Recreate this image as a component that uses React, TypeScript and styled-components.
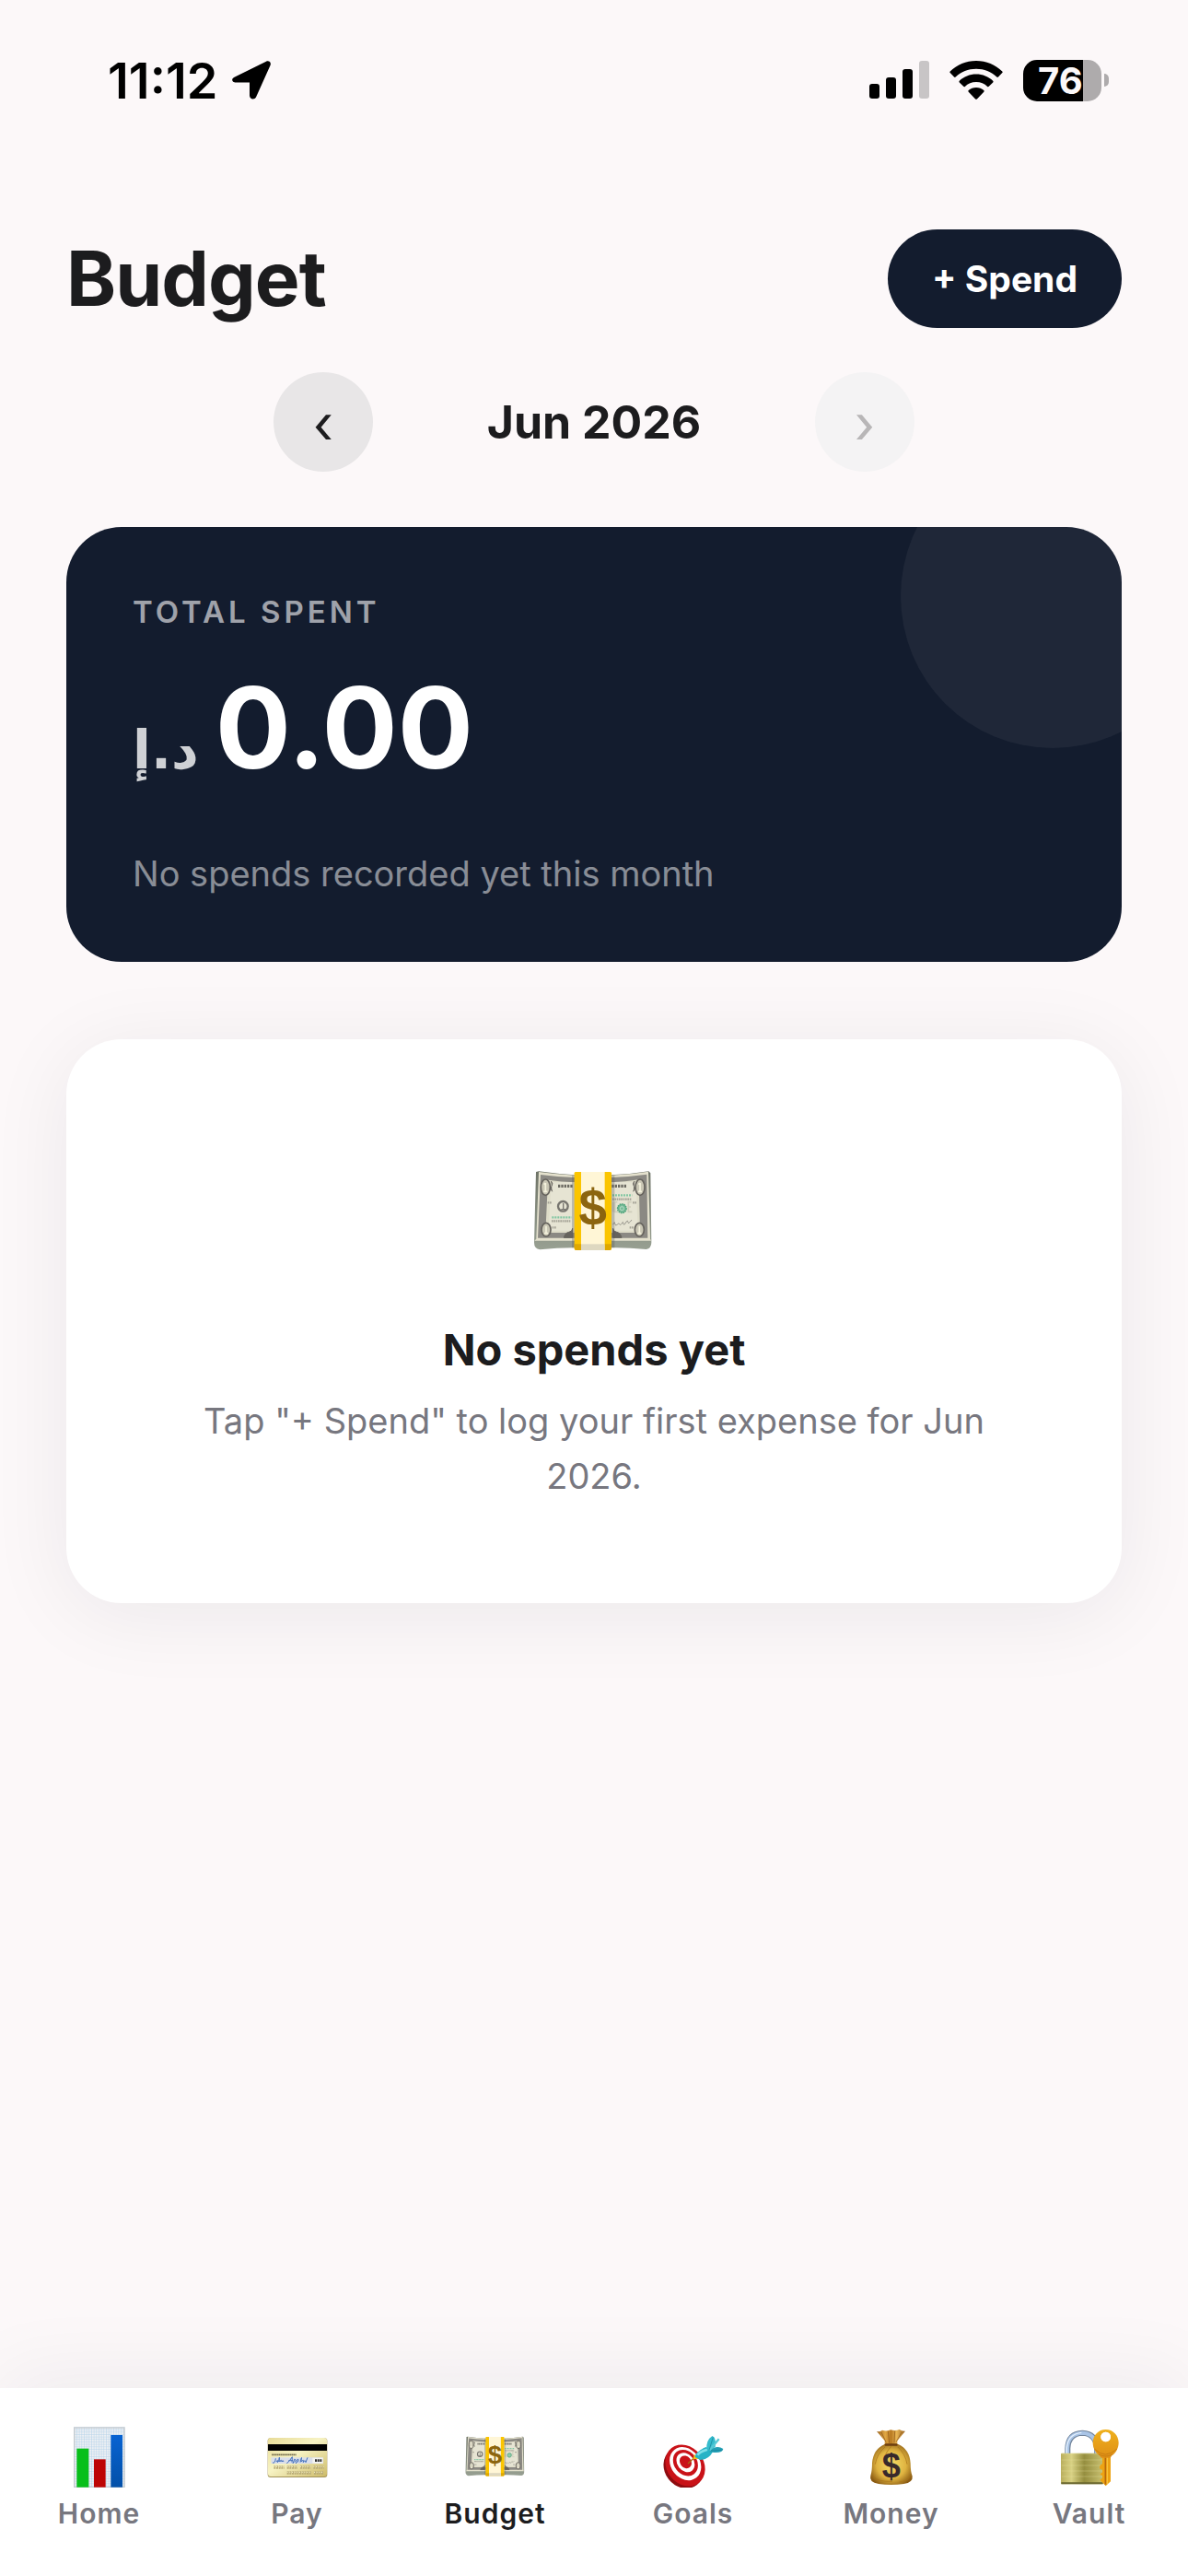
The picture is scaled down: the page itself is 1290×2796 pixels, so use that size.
import * as React from 'react';
import styled, { createGlobalStyle } from 'styled-components';

const GlobalStyle = createGlobalStyle`
  * {
    box-sizing: border-box;
  }

  body {
    margin: 0;
    background: #fcf8f9;
    color: #1c1c1e;
    font-family: Inter, 'DejaVu Sans', sans-serif;
  }

  h1, h2, p {
    margin: 0;
  }

  button {
    border: 0;
    font-family: inherit;
    cursor: pointer;
  }

  svg {
    display: block;
  }
`;

const Screen = styled.div`
  display: flex;
  flex-direction: column;
  min-height: 100vh;
`;

const StatusBar = styled.div`
  display: flex;
  justify-content: space-between;
  align-items: center;
  height: 174px;
  padding: 0 86px 0 117px;
  color: black;
`;

const StatusGroup = styled.div<{ $gap: number }>`
  display: flex;
  align-items: center;
  gap: ${({ $gap }) => $gap}px;
`;

const Time = styled.span`
  font-size: 54px;
  font-weight: 600;
`;

const Battery = styled.div`
  display: flex;
  align-items: center;
  gap: 3px;
`;

const BatteryBody = styled.div`
  width: 85px;
  height: 45px;
  padding-left: 16px;
  border-radius: 15px;
  background: linear-gradient(to right, black 76%, #aeabac 76%);
  color: #fcf8f9;
  font-size: 40px;
  font-weight: 700;
  line-height: 45px;
`;

const BatteryTip = styled.div`
  width: 5px;
  height: 14px;
  border-radius: 0 5px 5px 0;
  background: #aeabac;
`;

const Content = styled.main`
  flex: 1;
  padding: 75px 72px 60px;
`;

const Header = styled.header`
  display: flex;
  justify-content: space-between;
  align-items: center;
`;

const Title = styled.h1`
  font-size: 82px;
  font-weight: 700;
  line-height: 100px;
  letter-spacing: -1px;
`;

const SpendButton = styled.button`
  padding: 30px 48px;
  border-radius: 60px;
  background: #131c2e;
  color: white;
  font-size: 39px;
  font-weight: 700;
  line-height: 47px;
`;

const MonthPicker = styled.div`
  display: flex;
  justify-content: center;
  align-items: center;
  gap: 60px;
  margin-top: 48px;
`;

const MonthButton = styled.button`
  width: 108px;
  height: 108px;
  padding: 0;
  border-radius: 50%;
  background: #e8e6e7;
  color: #1c1c1e;
  font-size: 58px;
  font-weight: 400;
  line-height: 112px;

  &:disabled {
    background: #f4f3f4;
    color: #b8b6b7;
    cursor: default;
  }
`;

const Month = styled.div`
  width: 360px;
  font-size: 50px;
  font-weight: 700;
  text-align: center;
`;

const TotalCard = styled.section`
  position: relative;
  overflow: hidden;
  margin-top: 60px;
  padding: 72px;
  border-radius: 60px;
  background: #131c2e;
  color: white;

  &::after {
    content: '';
    position: absolute;
    top: -90px;
    right: -90px;
    width: 330px;
    height: 330px;
    border-radius: 50%;
    background: rgba(255, 255, 255, 0.05);
  }
`;

const TotalLabel = styled.h2`
  color: rgba(255, 255, 255, 0.6);
  font-size: 33px;
  font-weight: 600;
  line-height: 40px;
  letter-spacing: 4px;
`;

const Amount = styled.div`
  display: flex;
  align-items: baseline;
  gap: 18px;
  margin-top: 28px;
  font-size: 122px;
  font-weight: 700;
  line-height: 156px;
`;

const Currency = styled.span`
  color: rgba(255, 255, 255, 0.8);
  font-family: 'DejaVu Sans', sans-serif;
  font-size: 58px;
  line-height: 60px;
`;

const TotalNote = styled.p`
  margin-top: 56px;
  color: rgba(255, 255, 255, 0.5);
  font-size: 38px;
  line-height: 48px;
`;

const EmptyCard = styled.section`
  display: flex;
  flex-direction: column;
  align-items: center;
  margin-top: 84px;
  padding: 108px;
  border-radius: 60px;
  background: white;
  box-shadow: 0 12px 90px rgba(20, 28, 46, 0.07);
  text-align: center;
`;

const EmptyIcon = styled.div`
  display: flex;
  align-items: center;
  height: 160px;
`;

const EmptyTitle = styled.h2`
  margin-top: 40px;
  font-size: 47px;
  font-weight: 700;
  line-height: 58px;
`;

const EmptyText = styled.p`
  margin-top: 18px;
  color: #77777f;
  font-size: 38px;
  line-height: 60px;
`;

const TabBar = styled.nav`
  display: flex;
  padding: 42px 0 50px;
  background: white;
  box-shadow: 0 -12px 90px rgba(20, 28, 46, 0.06);
`;

const Tab = styled.a<{ $active?: boolean }>`
  display: flex;
  flex: 1;
  flex-direction: column;
  align-items: center;
  gap: 10px;
  color: ${({ $active }) => ($active ? '#1c1c1e' : '#77777f')};
  font-size: 30px;
  font-weight: 600;
  line-height: 36px;
  letter-spacing: 1px;
  text-decoration: none;
`;

const LocationArrow = () => (
  <svg width="42" height="42" viewBox="0 0 42 42">
    <path
      d="M3 17.5 37 .7c3-1.4 5.700 1 4.600 4L26 39.500c-1.400 3-7 2.600-7-1.700V23.500H4c-4.500 0-5.300-4.400-1-6z"
      fill="black"
    />
  </svg>
);

const Signal = () => (
  <svg width="65" height="42" viewBox="0 0 65 42">
    <rect x="0" y="25" width="11" height="16" rx="3" />
    <rect x="18" y="18" width="11" height="23" rx="3" />
    <rect x="36" y="9" width="11" height="32" rx="3" />
    <rect x="54" y="0" width="11" height="41" rx="3" fill="#c8c5c6" />
  </svg>
);

const Wifi = () => (
  <svg width="58" height="42" viewBox="0 0 58 42">
    <path d="M29 0C18 0 8 4.400.700 11.400c-.5.500-.5 1.200 0 1.700l4.300 4.400c.5.500 1.200.5 1.700 0C12.600 12 20.400 8.800 29 8.800S45.400 12 51.300 17.500c.5.500 1.200.5 1.700 0l4.300-4.400c.5-.5.5-1.200 0-1.700C50 4.400 40 0 29 0z" />
    <path d="M29 14.500c-7 0-13.400 2.700-18.200 7.200-.5.500-.5 1.200 0 1.700l4.400 4.400c.5.500 1.200.5 1.600.1 3.200-3 7.500-4.800 12.200-4.800s9 1.800 12.200 4.800c.4.400 1.100.4 1.600-.1l4.400-4.400c.5-.5.5-1.200 0-1.700C42.400 17.200 36 14.500 29 14.500z" />
    <path d="M29 29c-3.200 0-6 1.200-8.300 3.100-.5.500-.5 1.200 0 1.700l7.400 7.600c.5.500 1.300.5 1.800 0l7.400-7.600c.5-.5.500-1.200 0-1.700C35 30.200 32.200 29 29 29z" />
  </svg>
);

const Banknotes = ({ size }: { size: number }) => (
  <svg width={size} height={size} viewBox="4 0 396 396">
    <defs>
      <linearGradient id="noteEdge" x1="0" y1="0" x2="0" y2="1">
        <stop offset="0" stopColor="#6f7468" />
        <stop offset="1" stopColor="#98a092" />
      </linearGradient>
    </defs>
    <path
      d="M13 66 L22 64 Q80 72 138 76 H259 Q320 74 380 64 L386 70 389 296 Q389 314 372 318 Q310 312 259 313 H138 Q80 313 26 319 Q7 316 7 296z"
      fill="url(#noteEdge)"
    />
    <path d="M22 66 Q80 74 138 77 H259 Q320 75 379 65 L385 284 388 290 H8 L14 284z" fill="#e4e1cd" />
    <path d="M28 75 Q85 82 138 84 H259 Q315 82 374 74 L377 281 H19z" fill="#8b8983" />
    <path d="M52 92 Q96 98 140 100 H257 Q305 98 348 91 L352 264 H44z" fill="#dedcc8" />
    <path d="M62 100 h78 v157 H54z M257 100 h82 l6 157 h-88z" fill="#e6e4d3" />
    <g fill="#c9c6b4" stroke="#66635d" strokeWidth="5">
      <ellipse cx="44" cy="116" rx="15" ry="26" />
      <ellipse cx="352" cy="116" rx="15" ry="26" />
      <ellipse cx="46" cy="254" rx="15" ry="22" />
      <ellipse cx="350" cy="254" rx="15" ry="22" />
    </g>
    <path
      d="M44 102v28M39 107l5-5M38 130h12M352 102v28M347 107l5-5M346 130h12M46 242v24M40 266h12M350 242v24M344 266h12"
      fill="none"
      stroke="#f4f1dc"
      strokeWidth="5"
    />
    <path
      d="M62 96q8 8 2 16t2 18M334 96q-8 8-2 16t-2 18M104 280q4-16 16-18t12-12v30zM292 280q-4-16-16-18t-12-12v30z"
      fill="#66635d"
      stroke="#66635d"
      strokeWidth="3"
    />
    <path d="M85 112h50M260 112h50" stroke="#6c6a62" strokeWidth="10" strokeDasharray="7 3" />
    <circle cx="101" cy="178" r="16" fill="none" stroke="#77756f" strokeWidth="7" />
    <path d="M102 168v20M95 188h14" stroke="#77756f" strokeWidth="4" />
    <path d="M264 164v32M278 164h-8v32h10M324 164h-10v32h12M314 180h8" fill="none" stroke="#cfcdbb" strokeWidth="5" />
    <circle cx="293" cy="185" r="14" fill="#76bb98" stroke="#4fa47c" strokeWidth="5" strokeDasharray="5 2" />
    <circle cx="293" cy="185" r="6" fill="none" stroke="#bcdcc7" strokeWidth="3" />
    <path d="M65 214h64M262 142h64" stroke="#82c6a3" strokeWidth="7" strokeDasharray="6 3" />
    <path
      d="M64 226h62M262 155h62M51 166h14M328 166h14M66 247h12M318 247h12"
      stroke="#a5a397"
      strokeWidth="7"
      strokeDasharray="5 2"
    />
    <path
      d="M264 238q5-14 6-4t8 4q4-8 7-2t8-2q3-10 5 0t9-6q6-6 6 2t12-8"
      fill="none"
      stroke="#77756f"
      strokeWidth="2"
    />
    <path d="M130 77h10v236h-10zM259 77h10v236h-10z" fill="#555" opacity=".3" />
    <path d="M138 70q0-4 5-4h111q5 0 5 4v245q0 6-6 6H144q-6 0-6-6z" fill="#fbc500" />
    <path d="M160 66h77v255h-77z" fill="#fff6d6" />
    <path d="M138 301h22v20h-16q-6 0-6-6zM237 301h22v14q0 6-6 6h-16z" fill="#dfa800" />
    <path d="M160 301h77v20h-77z" fill="#ded8c0" />
    <text
      x="198"
      y="240"
      fill="#8c650f"
      fontFamily="Liberation Sans, sans-serif"
      fontSize="164"
      fontWeight="700"
      textAnchor="middle"
    >
      $
    </text>
  </svg>
);

const BarChart = () => (
  <svg width="66" height="66" viewBox="0 0 198 198">
    <defs>
      <pattern id="chartGrid" width="8" height="8" patternUnits="userSpaceOnUse">
        <rect width="8" height="8" fill="#eef1f4" />
        <path d="M0 0h8M0 0v8" stroke="#b4d2ea" strokeWidth="3" />
      </pattern>
      <linearGradient id="blueBar" x1="0" y1="0" x2="0" y2="1">
        <stop offset="0" stopColor="#0863d2" />
        <stop offset="1" stopColor="#0350a8" />
      </linearGradient>
    </defs>
    <rect x="15" y="1" width="167" height="197" fill="url(#chartGrid)" />
    <rect x="17" y="3" width="163" height="194" fill="none" stroke="#c5cbd0" strokeWidth="4" />
    <rect x="25" y="71" width="39" height="126" fill="#08bf1a" />
    <rect x="81" y="106" width="38" height="91" fill="#bd0505" />
    <rect x="136" y="27" width="38" height="170" fill="url(#blueBar)" />
  </svg>
);

const CreditCard = () => (
  <svg width="66" height="66" viewBox="0 0 198 198">
    <defs>
      <linearGradient id="cardFace" x1="0" y1="0" x2="1" y2="1">
        <stop offset="0" stopColor="#e8dc98" />
        <stop offset=".45" stopColor="#f7f3c4" />
        <stop offset="1" stopColor="#cdbb68" />
      </linearGradient>
    </defs>
    <rect x="2" y="37" width="194" height="128" rx="9" fill="#a2935a" />
    <rect x="3" y="36" width="192" height="126" rx="9" fill="url(#cardFace)" />
    <rect x="3" y="57" width="192" height="21" fill="black" />
    <path d="M15 91h80" stroke="#77704f" strokeWidth="5" strokeDasharray="5 1" />
    <rect x="13" y="100" width="170" height="20" fill="#d9deea" />
    <rect x="148" y="101" width="34" height="18" fill="#f4f4f0" />
    <path d="M156 110h22" stroke="#333" strokeWidth="8" strokeDasharray="6 2" />
    <path
      d="M18 117q8 4 10-14M30 114q6-10 4 2q6-2 6-16q-2 14 2 14q4-12 6 0q4-8 6 0M64 120q12-12 18-22l-1 18M70 110h14M84 120l5-14q8 0 0 10M94 120l5-14q8 0 0 10M108 116q6-20 4-14t0 12q8-12 6 2q6-12 8 0l6-16"
      fill="none"
      stroke="#4270bd"
      strokeWidth="3"
    />
    <path
      d="M22 132h34M65 132h34M108 132h34M151 132h34M65 150h78M153 150h32"
      stroke="#b9ac77"
      strokeWidth="10"
      strokeDasharray="6 2"
    />
    <path
      d="M22 130h34M65 130h34M108 130h34M151 130h34M65 148h78M153 148h32"
      stroke="#efe9c0"
      strokeWidth="4"
      strokeDasharray="3 5"
    />
  </svg>
);

const Target = () => (
  <svg width="66" height="66" viewBox="0 0 198 198">
    <ellipse cx="67" cy="133" rx="62" ry="71" fill="#8e0c10" transform="rotate(-38 67 133)" />
    <g transform="rotate(-38 72 126)">
      <ellipse cx="72" cy="126" rx="60" ry="72" fill="#c91218" />
      <ellipse cx="76" cy="122" rx="47" ry="58" fill="white" />
      <ellipse cx="78" cy="120" rx="37" ry="46" fill="#c91218" />
      <ellipse cx="79" cy="119" rx="27" ry="34" fill="white" />
      <ellipse cx="80" cy="118" rx="18" ry="22" fill="#c91218" />
    </g>
    <path d="M81 120 104 98" stroke="#a96a13" strokeWidth="4" />
    <path d="M97 106 102 90 118 104z" fill="#f2c211" />
    <path d="M104 98q2-18 36-32l22 16q-14 26-42 26z" fill="#27b3c6" />
    <path d="M112 92q10-12 32-18" stroke="#7fe0e8" strokeWidth="8" fill="none" />
    <path d="M142 72q-2-28 18-42 14 4 10 34l-14 18z" fill="#35bccd" />
    <path d="M150 82q22-26 46-10-2 14-30 12z" fill="#249fb5" />
    <path d="M152 76 182 40" stroke="#56c9d6" strokeWidth="7" />
    <path d="M150 76 163 34M156 78 192 76" stroke="#137f95" strokeWidth="2" />
  </svg>
);

const MoneyBag = () => (
  <svg width="66" height="66" viewBox="0 0 198 198">
    <defs>
      <radialGradient id="bagBody" cx=".5" cy=".5" r=".58">
        <stop offset="0" stopColor="#f5dc68" />
        <stop offset=".6" stopColor="#dfb340" />
        <stop offset="1" stopColor="#8a5a12" />
      </radialGradient>
      <linearGradient id="bagNeck" x1="0" y1="0" x2="1" y2="0">
        <stop offset="0" stopColor="#9c6420" />
        <stop offset=".3" stopColor="#e0a743" />
        <stop offset=".5" stopColor="#b97a22" />
        <stop offset=".7" stopColor="#e8b655" />
        <stop offset="1" stopColor="#985f1c" />
      </linearGradient>
    </defs>
    <path d="M51 15q10 2 18-4 14 5 28-1 14 4 28-1 8 6 19 5l-26 32v16H77V46z" fill="url(#bagNeck)" />
    <path d="M66 18l16 34M88 15l4 38M110 14l-2 38M132 18l-18 32" stroke="#8b5518" strokeWidth="2" />
    <path
      d="M77 57h44q37 16 40 62 0 26 6 42 3 20-28 25-41 6-82 0-32-5-26-26 5-16 5-42 4-46 41-61z"
      fill="url(#bagBody)"
    />
    <path
      d="M78 66q-26 22-32 56M98 64q-10 10-18 26M120 66q24 22 30 56M40 160q10 20 62 18M160 160q-8 18-36 20"
      stroke="#a87319"
      strokeWidth="3"
      fill="none"
      opacity=".7"
    />
    <rect x="77" y="55" width="42" height="7" rx="3" fill="#6e3f10" />
    <text
      x="99"
      y="166"
      fill="#37292b"
      fontFamily="Liberation Sans, sans-serif"
      fontSize="108"
      fontWeight="700"
      textAnchor="middle"
    >
      $
    </text>
  </svg>
);

const LockWithKey = () => (
  <svg width="66" height="66" viewBox="0 0 198 198">
    <defs>
      <linearGradient id="lockBody" x1="0" y1="0" x2="1" y2="0">
        <stop offset="0" stopColor="#b9ae5c" />
        <stop offset=".25" stopColor="#d8d184" />
        <stop offset=".55" stopColor="#958e3f" />
        <stop offset="1" stopColor="#c8c070" />
      </linearGradient>
      <linearGradient id="keyMetal" x1="0" y1="0" x2="0" y2="1">
        <stop offset="0" stopColor="#efb11d" />
        <stop offset="1" stopColor="#df8f16" />
      </linearGradient>
    </defs>
    <path d="M28 92V70q2-48 48-50 45 2 47 50v22" fill="none" stroke="#74869c" strokeWidth="18" />
    <path d="M27 92V70q2-48 49-50 44 2 46 50v22" fill="none" stroke="#a9c4e6" strokeWidth="12" />
    <path d="M25 88V68q4-44 48-49" fill="none" stroke="#e3effb" strokeWidth="4" />
    <rect x="6" y="86" width="138" height="101" rx="3" fill="url(#lockBody)" />
    <path d="M8 89h134M8 108h134M8 126h134M8 144h134M8 162h134" stroke="#eee9a5" strokeWidth="3" opacity=".3" />
    <path d="M7 184h136" stroke="#69662e" strokeWidth="6" />
    <path
      d="M141 94h27v84l-16 15-12-13q-6-2-6-8l7-5v-8q-8-1-7-6l7-4v-9q-10-2-9-9t9-10z"
      fill="#eda313"
    />
    <path d="M151 96v92" stroke="#b9690b" strokeWidth="5" />
    <path d="M157 96v90" stroke="#f9c949" strokeWidth="3" />
    <path
      fillRule="evenodd"
      d="M152 9c24 0 42 19 42 43 0 19-10 35-22 42l-5 7h-30l-5-7c-12-7-22-23-22-42 0-24 18-43 42-43zm0 8a16 16 0 1 0 .1 0z"
      fill="url(#keyMetal)"
    />
    <circle cx="152" cy="33" r="16" fill="white" />
    <path d="M115 72q35 36 74 0M129 90q22 12 46 0" fill="none" stroke="#bd720e" strokeWidth="2" />
  </svg>
);

interface TabItem {
  label: string;
  icon: React.ReactNode;
}

const tabs: TabItem[] = [
  { label: 'Home', icon: <BarChart /> },
  { label: 'Pay', icon: <CreditCard /> },
  { label: 'Budget', icon: <Banknotes size={66} /> },
  { label: 'Goals', icon: <Target /> },
  { label: 'Money', icon: <MoneyBag /> },
  { label: 'Vault', icon: <LockWithKey /> },
];

function App() {
  return (
    <Screen>
      <GlobalStyle />
      <StatusBar>
        <StatusGroup $gap={16}>
          <Time>11:12</Time>
          <LocationArrow />
        </StatusGroup>
        <StatusGroup $gap={22}>
          <Signal />
          <Wifi />
          <Battery>
            <BatteryBody>76</BatteryBody>
            <BatteryTip />
          </Battery>
        </StatusGroup>
      </StatusBar>
      <Content>
        <Header>
          <Title>Budget</Title>
          <SpendButton type="button">+ Spend</SpendButton>
        </Header>
        <MonthPicker>
          <MonthButton type="button" aria-label="Previous month">
            ‹
          </MonthButton>
          <Month>Jun 2026</Month>
          <MonthButton type="button" aria-label="Next month" disabled>
            ›
          </MonthButton>
        </MonthPicker>
        <TotalCard>
          <TotalLabel>TOTAL SPENT</TotalLabel>
          <Amount>
            <Currency>د.إ</Currency>
            <span>0.00</span>
          </Amount>
          <TotalNote>No spends recorded yet this month</TotalNote>
        </TotalCard>
        <EmptyCard>
          <EmptyIcon>
            <Banknotes size={132} />
          </EmptyIcon>
          <EmptyTitle>No spends yet</EmptyTitle>
          <EmptyText>Tap "+ Spend" to log your first expense for Jun 2026.</EmptyText>
        </EmptyCard>
      </Content>
      <TabBar>
        {tabs.map(({ label, icon }) => (
          <Tab
            key={label}
            href={`#${label.toLowerCase()}`}
            $active={label === 'Budget'}
            aria-current={label === 'Budget' ? 'page' : undefined}
          >
            {icon}
            {label}
          </Tab>
        ))}
      </TabBar>
    </Screen>
  );
}

export default App;
